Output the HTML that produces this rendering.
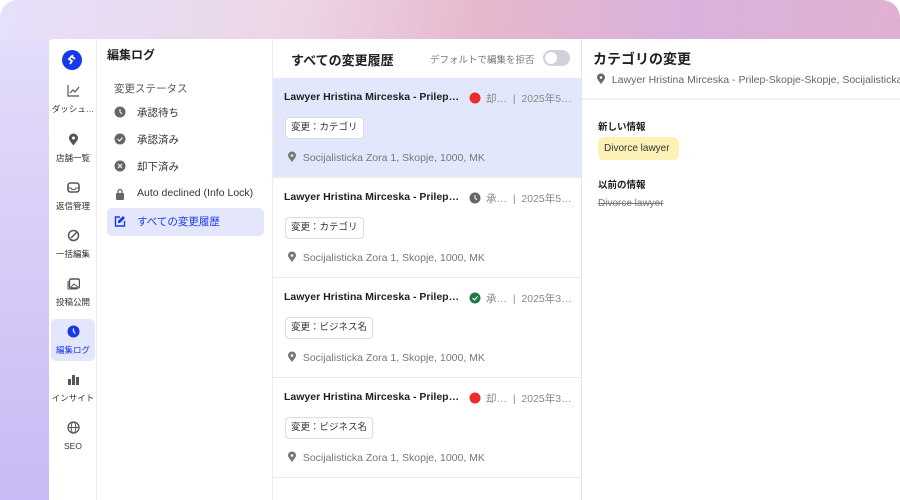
<!DOCTYPE html>
<html><head><meta charset="utf-8"><style>
*{margin:0;padding:0;box-sizing:border-box}
body{width:900px;height:500px;overflow:hidden;font-family:"Liberation Sans","Noto Sans CJK JP",sans-serif;background:#fff;position:relative}
.bg{position:absolute;inset:0;border-radius:18px;background:linear-gradient(100deg,#e6e0fb 0%,#ecd6e6 30%,#e6b6cc 50%,#d9b2dc 70%,#e2b0cc 100%)}
.bg2{position:absolute;left:0;top:40px;width:60px;bottom:0;background:linear-gradient(180deg,#e3dcfa,#c9b9f4)}
.app{position:absolute;left:49px;top:39px;right:0;bottom:0;background:#fff;border-top-left-radius:4px}
.abs{position:absolute}
.nav{left:0;top:0;width:48px;bottom:0;border-right:1px solid #ececf0}
.ni{position:absolute;left:0;width:48px;text-align:center;font-size:8.5px;color:#333;line-height:12px}
.ni svg{margin-bottom:3px}
.p2{left:49px;top:0;width:175px;bottom:0;border-right:1px solid #ececf0}
.p3{left:224px;top:0;width:309px;bottom:0;border-right:1px solid #e4e4e8}
.it{position:absolute;left:0;width:308px;height:100px;border-bottom:1px solid #ececf0}
.t{position:absolute;left:11px;top:13px;font-size:10.5px;font-weight:bold;color:#222;white-space:nowrap}
.tag{position:absolute;left:12px;top:39px;height:22px;border:1px solid #dcdce2;border-radius:4px;background:#fff;font-size:9.5px;line-height:20px;padding:0 5px;color:#333}
.ad{position:absolute;left:14px;top:73px;font-size:10.5px;color:#777;white-space:nowrap}
.st{position:absolute;top:13px;font-size:10.5px;color:#888;white-space:nowrap}
</style></head><body>
<div class="bg"></div><div class="bg2"></div>
<div class="app">
 <div class="abs nav">
  <svg class="abs" style="left:13px;top:11px" width="20" height="20"><circle cx="10" cy="10" r="10" fill="#1739ea"/><path d="M11 5l-4 4 3 2-2 3M9 6l4 3" stroke="#fff" stroke-width="1.8" fill="none"/></svg>
  <div class="ni" style="top:45px"><svg width="13" height="13"><path d="M1 1v11h11M3 9l3-3 2 2 4-5" stroke="#555" stroke-width="1.2" fill="none"/></svg><div>ダッシュ…</div></div>
  <div class="ni" style="top:94px"><svg width="13" height="13"><path d="M6.5 12.5C2 7 2 6 2 5a4.5 4.5 0 019 0c0 1 0 2-4.5 7.5z" fill="#555"/><circle cx="6.5" cy="5" r="1.5" fill="#fff"/></svg><div>店舗一覧</div></div>
  <div class="ni" style="top:142px"><svg width="13" height="13"><rect x="1" y="2" width="11" height="9" rx="2.5" fill="none" stroke="#555" stroke-width="1.6"/><path d="M1 7h3l1 1.5h3L9 7h3" stroke="#555" fill="none"/></svg><div>返信管理</div></div>
  <div class="ni" style="top:190px"><svg width="13" height="13"><circle cx="6.5" cy="6.5" r="5" fill="none" stroke="#555" stroke-width="1.5"/><path d="M4 9l5.5-5.5" stroke="#555" stroke-width="1.5"/></svg><div>一括編集</div></div>
  <div class="ni" style="top:238px"><svg width="13" height="13"><rect x="2.5" y="2" width="10" height="9" rx="1.5" fill="none" stroke="#555" stroke-width="1.4"/><path d="M1 4v8h9" stroke="#555" fill="none"/><path d="M4 10l3-3 4 3" stroke="#555" fill="none"/></svg><div>投稿公開</div></div>
  <div class="abs" style="left:2px;top:280px;width:44px;height:42px;background:#e4e6fb;border-radius:5px"></div>
  <div class="ni" style="top:286px;color:#1739ea"><svg width="13" height="13"><circle cx="6.5" cy="6.5" r="6" fill="#1739ea"/><path d="M6.5 3.5v3l2 2" stroke="#fff" stroke-width="1.2" fill="none"/></svg><div>編集ログ</div></div>
  <div class="ni" style="top:334px"><svg width="13" height="13"><rect x="1" y="6" width="3" height="6" fill="#555"/><rect x="5" y="2" width="3" height="10" fill="#555"/><rect x="9" y="4" width="3" height="8" fill="#555"/></svg><div>インサイト</div></div>
  <div class="ni" style="top:382px"><svg width="13" height="13"><circle cx="6.5" cy="6.5" r="5.5" fill="none" stroke="#555" stroke-width="1.3"/><ellipse cx="6.5" cy="6.5" rx="2.3" ry="5.5" fill="none" stroke="#555"/><path d="M1 6.5h11" stroke="#555"/></svg><div>SEO</div></div>
 </div>
 <div class="abs p2">
  <div class="abs" style="left:9px;top:7px;font-size:12px;font-weight:bold;color:#222">編集ログ</div>
  <div class="abs" style="left:16px;top:42px;font-size:10.5px;color:#555">変更ステータス</div>
  <svg class="abs" style="left:16px;top:67px" width="12" height="12"><circle cx="6" cy="6" r="5.5" fill="#666"/><path d="M6 3v3l2 2" stroke="#fff" fill="none"/></svg>
  <div class="abs" style="left:39px;top:66px;font-size:10.5px;color:#333">承認待ち</div>
  <svg class="abs" style="left:16px;top:94px" width="12" height="12"><circle cx="6" cy="6" r="5.5" fill="#666"/><path d="M3.5 6l2 2 3-3.5" stroke="#fff" fill="none"/></svg>
  <div class="abs" style="left:39px;top:93px;font-size:10.5px;color:#333">承認済み</div>
  <svg class="abs" style="left:16px;top:121px" width="12" height="12"><circle cx="6" cy="6" r="5.5" fill="#666"/><path d="M4 4l4 4M8 4l-4 4" stroke="#fff"/></svg>
  <div class="abs" style="left:39px;top:120px;font-size:10.5px;color:#333">却下済み</div>
  <svg class="abs" style="left:16px;top:149px" width="12" height="12"><rect x="2" y="5" width="8" height="7" rx="1" fill="#666"/><path d="M4 5V3.5a2 2 0 014 0V5" stroke="#666" stroke-width="1.3" fill="none"/></svg>
  <div class="abs" style="left:39px;top:148px;font-size:10.5px;color:#333">Auto declined (Info Lock)</div>
  <div class="abs" style="left:9px;top:169px;width:157px;height:28px;background:#e4e6fb;border-radius:5px"></div>
  <svg class="abs" style="left:16px;top:176px" width="12" height="12"><path d="M9 1l2 2-5 5H4V6z" fill="#1739ea"/><path d="M6 2H1.5v9h9V6" stroke="#1739ea" stroke-width="1.4" fill="none"/></svg>
  <div class="abs" style="left:39px;top:175px;font-size:10.5px;color:#1739ea">すべての変更履歴</div>
 </div>
 <div class="abs p3">
  <div class="abs" style="left:18px;top:11px;font-size:13px;font-weight:bold;color:#222">すべての変更履歴</div>
  <div class="abs" style="left:157px;top:13px;font-size:9.5px;color:#777">デフォルトで編集を拒否</div>
  <div class="abs" style="left:270px;top:11px;width:27px;height:16px;border-radius:8px;background:#cfd2d9"><div style="position:absolute;left:2px;top:2px;width:12px;height:12px;border-radius:6px;background:#fff"></div></div>
  <div class="it" style="top:39px;background:#e3e7fb">
   <div class="t">Lawyer Hristina Mirceska - Prilep…</div>
   <svg class="abs" style="left:196px;top:14px" width="12" height="12"><circle cx="6" cy="6" r="5.5" fill="#ee2a2a"/></svg>
   <div class="st" style="left:213px">却…&nbsp;&nbsp;|&nbsp;&nbsp;2025年5…</div>
   <div class="tag">変更：カテゴリ</div>
   <div class="ad"><svg width="10" height="11" style="vertical-align:-1px"><path d="M5 11C1 6 1 5 1 4.5a4 4 0 018 0C9 5 9 6 5 11z" fill="#777"/><circle cx="5" cy="4.5" r="1.3" fill="#e3e7fb"/></svg>&nbsp; Socijalisticka Zora 1, Skopje, 1000, MK</div>
  </div>
  <div class="it" style="top:139px">
   <div class="t">Lawyer Hristina Mirceska - Prilep…</div>
   <svg class="abs" style="left:196px;top:14px" width="12" height="12"><circle cx="6" cy="6" r="5.5" fill="#666"/><path d="M6 3v3l2 2" stroke="#fff" fill="none"/></svg>
   <div class="st" style="left:213px">承…&nbsp;&nbsp;|&nbsp;&nbsp;2025年5…</div>
   <div class="tag">変更：カテゴリ</div>
   <div class="ad"><svg width="10" height="11" style="vertical-align:-1px"><path d="M5 11C1 6 1 5 1 4.5a4 4 0 018 0C9 5 9 6 5 11z" fill="#777"/><circle cx="5" cy="4.5" r="1.3" fill="#fff"/></svg>&nbsp; Socijalisticka Zora 1, Skopje, 1000, MK</div>
  </div>
  <div class="it" style="top:239px">
   <div class="t">Lawyer Hristina Mirceska - Prilep…</div>
   <svg class="abs" style="left:196px;top:14px" width="12" height="12"><circle cx="6" cy="6" r="5.5" fill="#1f7a45"/><path d="M3.5 6l2 2 3-3.5" stroke="#fff" fill="none"/></svg>
   <div class="st" style="left:213px">承…&nbsp;&nbsp;|&nbsp;&nbsp;2025年3…</div>
   <div class="tag">変更：ビジネス名</div>
   <div class="ad"><svg width="10" height="11" style="vertical-align:-1px"><path d="M5 11C1 6 1 5 1 4.5a4 4 0 018 0C9 5 9 6 5 11z" fill="#777"/><circle cx="5" cy="4.5" r="1.3" fill="#fff"/></svg>&nbsp; Socijalisticka Zora 1, Skopje, 1000, MK</div>
  </div>
  <div class="it" style="top:339px">
   <div class="t">Lawyer Hristina Mirceska - Prilep…</div>
   <svg class="abs" style="left:196px;top:14px" width="12" height="12"><circle cx="6" cy="6" r="5.5" fill="#ee2a2a"/></svg>
   <div class="st" style="left:213px">却…&nbsp;&nbsp;|&nbsp;&nbsp;2025年3…</div>
   <div class="tag">変更：ビジネス名</div>
   <div class="ad"><svg width="10" height="11" style="vertical-align:-1px"><path d="M5 11C1 6 1 5 1 4.5a4 4 0 018 0C9 5 9 6 5 11z" fill="#777"/><circle cx="5" cy="4.5" r="1.3" fill="#fff"/></svg>&nbsp; Socijalisticka Zora 1, Skopje, 1000, MK</div>
  </div>
 </div>
 <div class="abs" style="left:533px;top:0;right:0;height:61px;border-bottom:2px solid #f0f0f3"></div>
 <div class="abs" style="left:544px;top:10px;font-size:14px;font-weight:bold;color:#222">カテゴリの変更</div>
 <div class="abs" style="left:547px;top:34px;font-size:10.5px;color:#666;white-space:nowrap"><svg width="10" height="11" style="vertical-align:-1px"><path d="M5 11C1 6 1 5 1 4.5a4 4 0 018 0C9 5 9 6 5 11z" fill="#666"/><circle cx="5" cy="4.5" r="1.3" fill="#fff"/></svg>&nbsp; Lawyer Hristina Mirceska - Prilep-Skopje-Skopje, Socijalisticka</div>
 <div class="abs" style="left:549px;top:80px;font-size:9.5px;font-weight:bold;color:#222">新しい情報</div>
 <div class="abs" style="left:549px;top:98px;width:81px;height:23px;background:#fcf2b6;border-radius:6px;font-size:10px;line-height:23px;padding-left:6px;color:#333">Divorce lawyer</div>
 <div class="abs" style="left:549px;top:138px;font-size:9.5px;font-weight:bold;color:#222">以前の情報</div>
 <div class="abs" style="left:549px;top:159px;font-size:10px;color:#777;text-decoration:line-through">Divorce lawyer</div>
</div>
</body></html>
